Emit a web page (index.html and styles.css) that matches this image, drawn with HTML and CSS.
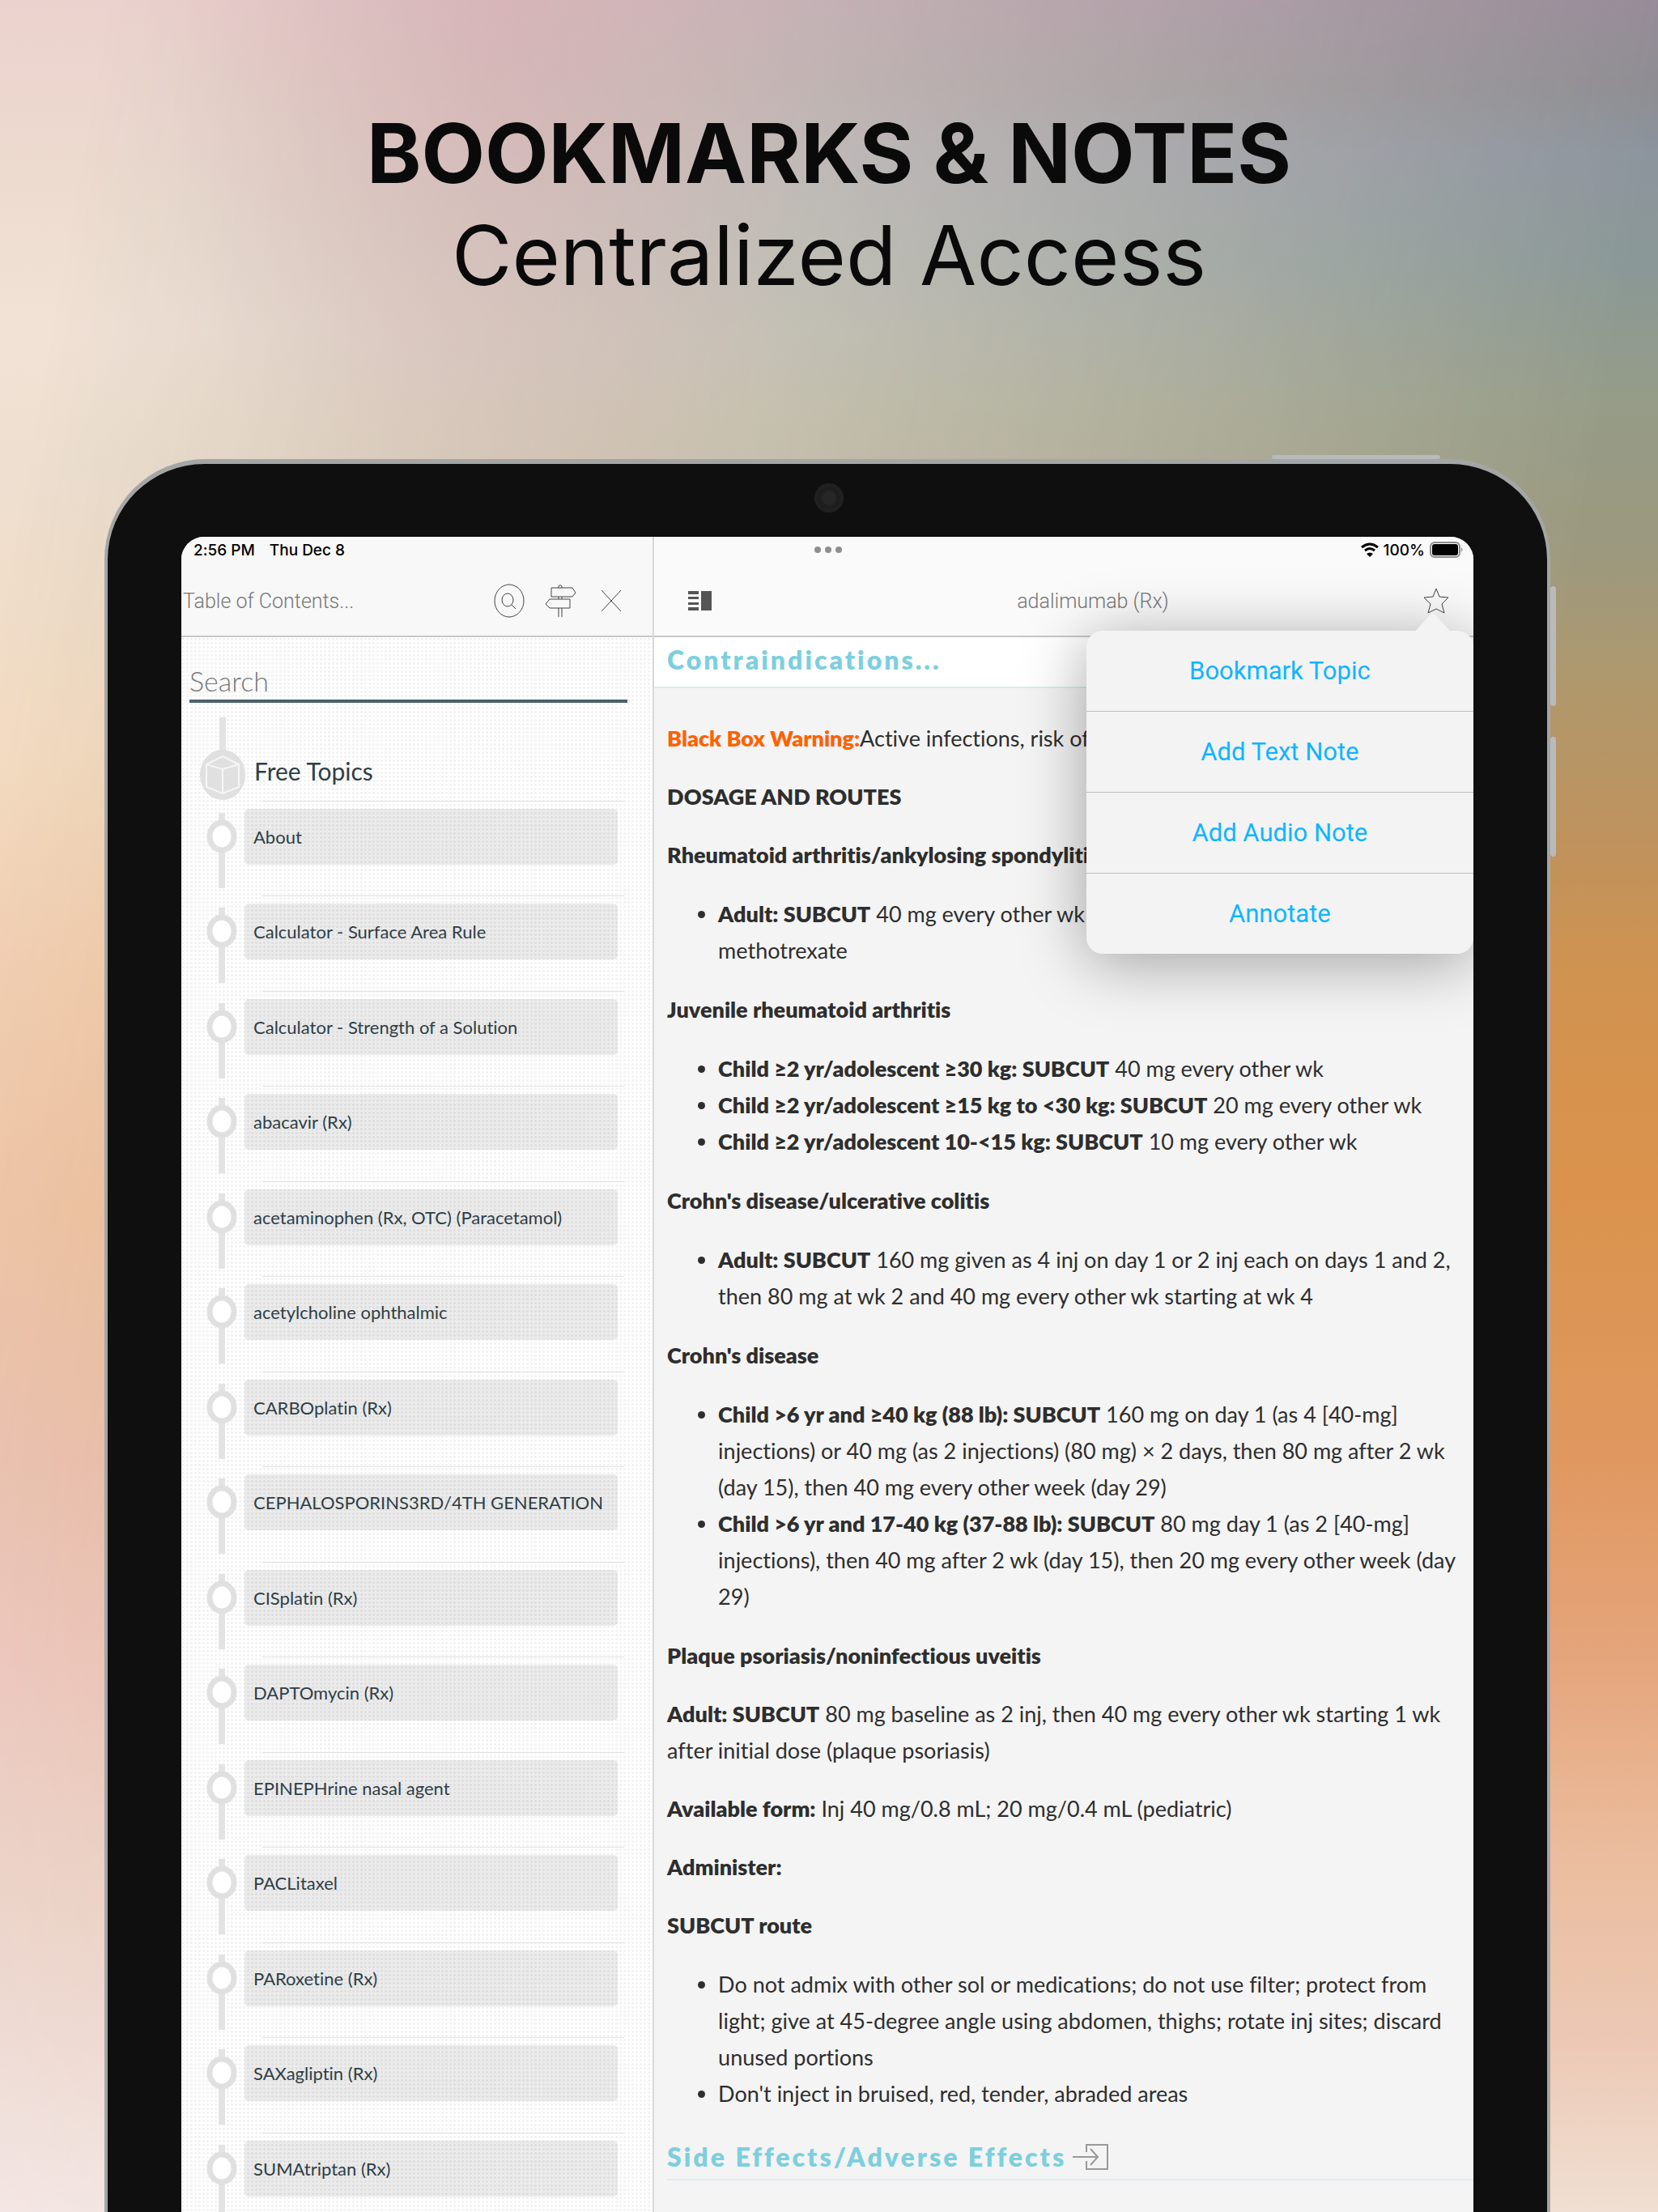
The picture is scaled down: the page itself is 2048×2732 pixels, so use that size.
FILE: index.html
```html
<!DOCTYPE html>
<html lang="en">
<head>
    <meta charset="UTF-8">
    <meta name="viewport" content="width=device-width, initial-scale=1.0">
    <title>Bookmarks &amp; Notes</title>
    <link rel="stylesheet" href="styles.css">
</head>
<body>
  <div class="page">
    <header class="title">
      <h1>BOOKMARKS &amp; NOTES</h1>
      <p>Centralized Access</p>
    </header>
    <div class="device">
      <span class="key key-power"></span>
      <span class="key key-up"></span>
      <span class="key key-down"></span>
      <span class="camera"></span>
      <div class="screen">
        <aside class="left">
          <div class="bar">
            <div class="status"><span>2:56 PM</span><span>Thu Dec 8</span></div>
            <div class="tools">
              <h2>Table of Contents...</h2>
              <button type="button" aria-label="Search">
                <svg width="40" height="42" viewBox="0 0 40 42"><ellipse cx="20" cy="21" rx="18" ry="20"/><ellipse cx="18" cy="20" rx="7" ry="8"/><path d="M23 26l5 5"/></svg>
              </button>
              <button type="button" aria-label="Guide">
                <svg width="40" height="42" viewBox="0 0 40 42"><path d="M18 5V3q2-3 4 0v2M9 5h26l4 6-4 5H9zM18 16v3M22 16v3M32 19H7l-5 6 5 5h25zM18 30v11M22 30v11"/></svg>
              </button>
              <button type="button" aria-label="Close">
                <svg width="40" height="42" viewBox="0 0 40 42"><path d="M8 8l24 26M32 8L8 34"/></svg>
              </button>
            </div>
          </div>
          <div class="toc">
            <input type="text" class="keyword" placeholder="Search" aria-label="Search" />
            <div class="group">
              <svg width="58" height="104" viewBox="0 0 58 104">
                <rect x="25" y="0" width="8" height="42" fill="#e3e3e3"/>
                <ellipse cx="29" cy="71" rx="28" ry="31" fill="#e0e0e0"/>
                <path d="M29 48l20 10v28L29 94 9 86V58zM9 58l20 6 20-6M29 64v30" fill="none" stroke="#f6f6f6" stroke-width="2"/>
              </svg>
              <h3>Free Topics</h3>
            </div>
            <ul class="topics"></ul>
          </div>
        </aside>
        <main class="right">
          <div class="bar">
            <div class="status end">
              <svg width="22" height="18" viewBox="0 0 22 18" fill="none" stroke="#000" stroke-width="3"><path d="M1 6q10-8 20 0M5 10q6-5 12 0"/><path d="M11 18l-4-4q4-3 8 0z" fill="#000" stroke="none"/></svg>
              <span>100%</span>
              <svg width="42" height="20" viewBox="0 0 42 20"><rect x="1" y="1" width="36" height="18" rx="5" fill="none" stroke="#8c8c8c" stroke-width="2"/><rect x="3" y="3" width="32" height="14" rx="3"/><path d="M39 7q3 3 0 6z" fill="#8c8c8c"/></svg>
            </div>
            <div class="tools">
              <button type="button" aria-label="Toggle contents">
                <svg class="solid" width="29" height="24" viewBox="0 0 29 24"><path d="M0 0h13v4H0zM0 7h13v3H0zM0 14h13v3H0zM0 20h13v4H0zM16 0h13v24H16z"/></svg>
              </button>
              <h2>adalimumab (Rx)</h2>
              <button type="button" aria-label="Bookmark">
                <svg width="34" height="34" viewBox="0 0 34 34"><path d="M17 2l4 10 11 1-8 8 3 11-10-5-10 5 3-11-8-8 11-1z" stroke-linejoin="round"/></svg>
              </button>
            </div>
          </div>
          <h2 class="section">Contraindications...</h2>
          <article>
            <p><b class="warning">Black Box Warning:</b>Active infections, risk of infection</p>
            <p><b>DOSAGE AND ROUTES</b></p>
            <p><b>Rheumatoid arthritis/ankylosing spondylitis</b></p>
            <ul>
              <li><b>Adult: SUBCUT</b> 40 mg every other wk<br>methotrexate</li>
            </ul>
            <p><b>Juvenile rheumatoid arthritis</b></p>
            <ul>
              <li><b>Child ≥2 yr/adolescent ≥30 kg: SUBCUT</b> 40 mg every other wk</li>
              <li><b>Child ≥2 yr/adolescent ≥15 kg to &lt;30 kg: SUBCUT</b> 20 mg every other wk</li>
              <li><b>Child ≥2 yr/adolescent 10-&lt;15 kg: SUBCUT</b> 10 mg every other wk</li>
            </ul>
            <p><b>Crohn's disease/ulcerative colitis</b></p>
            <ul>
              <li><b>Adult: SUBCUT</b> 160 mg given as 4 inj on day 1 or 2 inj each on days 1 and 2, then 80 mg at wk 2 and 40 mg every other wk starting at wk 4</li>
            </ul>
            <p><b>Crohn's disease</b></p>
            <ul>
              <li><b>Child &gt;6 yr and ≥40 kg (88 lb): SUBCUT</b> 160 mg on day 1 (as 4 [40-mg] injections) or 40 mg (as 2 injections) (80 mg) × 2 days, then 80 mg after 2 wk (day 15), then 40 mg every other week (day 29)</li>
              <li><b>Child &gt;6 yr and 17-40 kg (37-88 lb): SUBCUT</b> 80 mg day 1 (as 2 [40-mg] injections), then 40 mg after 2 wk (day 15), then 20 mg every other week (day 29)</li>
            </ul>
            <p><b>Plaque psoriasis/noninfectious uveitis</b></p>
            <p><b>Adult: SUBCUT</b> 80 mg baseline as 2 inj, then 40 mg every other wk starting 1 wk after initial dose (plaque psoriasis)</p>
            <p><b>Available form:</b> Inj 40 mg/0.8 mL; 20 mg/0.4 mL (pediatric)</p>
            <p><b>Administer:</b></p>
            <p><b>SUBCUT route</b></p>
            <ul>
              <li>Do not admix with other sol or medications; do not use filter; protect from light; give at 45-degree angle using abdomen, thighs; rotate inj sites; discard unused portions</li>
              <li>Don't inject in bruised, red, tender, abraded areas</li>
            </ul>
            <h2 class="next">Side Effects/Adverse Effects
              <svg width="44" height="32" viewBox="0 0 44 32"><path d="M17 10V1h26v30H17V21M0 16h30M22 6l9 10-9 10"/></svg>
            </h2>
          </article>
          <div class="menu">
            <button type="button">Bookmark Topic</button>
            <button type="button">Add Text Note</button>
            <button type="button">Add Audio Note</button>
            <button type="button">Annotate</button>
          </div>
        </main>
        <span class="dots"><i></i><i></i><i></i></span>
      </div>
    </div>
  </div>
  <script>
    const topics = [
      'About',
      'Calculator - Surface Area Rule',
      'Calculator - Strength of a Solution',
      'abacavir (Rx)',
      'acetaminophen (Rx, OTC) (Paracetamol)',
      'acetylcholine ophthalmic',
      'CARBOplatin (Rx)',
      'CEPHALOSPORINS3RD/4TH GENERATION',
      'CISplatin (Rx)',
      'DAPTOmycin (Rx)',
      'EPINEPHrine nasal agent',
      'PACLitaxel',
      'PARoxetine (Rx)',
      'SAXagliptin (Rx)',
      'SUMAtriptan (Rx)',
    ];
    document.querySelector('.topics').innerHTML = topics
      .map((value) => {
        return `
          <li>
            <svg width="38" height="93" viewBox="0 0 38 93">
              <path d="M15 0h8v93h-8z" fill="#e3e3e3"/>
              <ellipse cx="19" cy="29" rx="15" ry="17" fill="#fff" stroke="#e0e0e0" stroke-width="7"/>
            </svg>
            <a href="#">${value}</a>
          </li>`;
      })
      .join('');
  </script>
</body>
</html>
```
FILE: styles.css
```css
* {
  margin: 0;
  padding: 0;
  box-sizing: border-box;
}
body {
  font-family: Lato, "Open Sans", sans-serif;
  font-variant-ligatures: none;
  color: #2e2e2e;
}
button {
  border: none;
  background: none;
  font: inherit;
}
svg {
  display: block;
  flex: none;
}
.page {
  position: relative;
  z-index: 0;
  height: 100vh;
  overflow: hidden;
  background: linear-gradient(#ecd2ce, #eddccf 9%, #f2e2d6 15%, #eedfd0 21%, #f4dcc2 35%, #f2d0b5 44%, #eec8ac 55%, #eac6b8 66%, #edccc6 75%, #ecd8d0 86%, #f4e8e8);
}
/* right side of the backdrop, faded towards the left */
.page::before {
  content: "";
  position: absolute;
  inset: 0;
  z-index: -1;
  background: linear-gradient(#958a97, #8d8d92 4%, #8c949d 7%, #8a9896 12%, #959c88 18%, #9c997e 25%, #b0986c 31%, #bf925d 38%, #d09350 44%, #da924c 53%, #e09860 66%, #e5a57c 75%, #ebbd9e 84%, #ecc8b4 92%, #f0dfd2);
  -webkit-mask-image: linear-gradient(100deg, transparent 5%, #000 82%);
  mask-image: linear-gradient(100deg, transparent 5%, #000 82%);
}
.page::after {
  content: "";
  position: absolute;
  inset: 0;
  z-index: -1;
  background: radial-gradient(ellipse at 30% 2%, rgba(216, 160, 170, .35), rgba(216, 160, 170, 0) 20%);
}
.title {
  padding-top: 126px;
  text-align: center;
  color: #0a0a0a;
  font-family: Inter, sans-serif;
  font-size: 102px;
  line-height: 126px;
}
.title h1 {
  font-size: 102px;
  font-weight: 700;
}

/* tablet */
.device {
  position: relative;
  margin: 189px 6.5% 0 6.3%;
  padding: 90px 91px 0;
  background: #0f0f0f;
  border: 4px solid #a4a6a6;
  border-top-width: 6px;
  border-bottom: none;
  border-radius: 124px 124px 0 0;
}
.key {
  position: absolute;
  background: #b9babc;
  border-radius: 4px;
}
.key-power {
  top: -11px;
  right: 132px;
  width: 208px;
  height: 5px;
}
.key-up,
.key-down {
  right: -11px;
  width: 7px;
  height: 148px;
}
.key-up {
  top: 151px;
}
.key-down {
  top: 337px;
}
.camera {
  position: absolute;
  top: 24px;
  left: 50%;
  width: 36px;
  height: 36px;
  margin-left: -16px;
  border-radius: 50%;
  background: radial-gradient(#262626 30%, #1c1c1c 45%, #212121 60%);
}
.screen {
  position: relative;
  display: flex;
  height: 2200px;
  border-radius: 28px 28px 0 0;
  overflow: hidden;
  background: #f4f4f4;
}
.dots {
  position: absolute;
  top: 12px;
  left: 50%;
  display: flex;
  gap: 5px;
  margin-left: -16px;
}
.dots i {
  width: 8px;
  height: 8px;
  border-radius: 50%;
  background: #8f8f8f;
}

/* bars */
.bar {
  height: 124px;
  border-bottom: 2px solid #c8c8c8;
  background: #f8f8f8;
}
.status {
  display: flex;
  align-items: center;
  gap: 18px;
  height: 32px;
  padding: 0 15px;
  color: #000;
  font-family: Inter, sans-serif;
  font-size: 19px;
  font-weight: 500;
}
.status.end {
  justify-content: flex-end;
  gap: 6px;
  padding-right: 12px;
}
.tools {
  display: flex;
  align-items: center;
  gap: 23px;
  height: 94px;
}
.tools svg {
  fill: none;
  stroke: #444;
}
.tools .solid {
  fill: #555;
  stroke: none;
}
.tools h2 {
  flex: 1;
  color: #777;
  font-family: Roboto, sans-serif;
  font-size: 25px;
  font-weight: 300;
}

/* table of contents */
.left {
  width: 36.6%;
  border-right: 2px solid #d9d9d9;
}
.left .tools {
  padding: 0 31px 0 2px;
}
.toc {
  height: 100%;
  background: #fff radial-gradient(circle, #f1f1f1 1px, transparent 2px) 0 0 / 5px 5px;
  padding: 27px 31px 0 10px;
}
.keyword {
  display: block;
  width: 100%;
  height: 54px;
  padding-top: 2px;
  border: none;
  border-bottom: 4px solid #4a626a;
  background: none;
  font-family: inherit;
  font-size: 34px;
  font-weight: 300;
  outline: none;
}
.keyword::placeholder {
  color: #777;
}
.group {
  display: flex;
  align-items: flex-start;
  gap: 10px;
  height: 121px;
  padding: 18px 12px 0;
}
.group h3 {
  padding-top: 48px;
  color: #2f3e46;
  font-size: 30px;
  font-weight: 400;
  line-height: 36px;
}
.topics {
  list-style: none;
}
.topics li {
  display: flex;
  align-items: flex-start;
  gap: 9px;
  height: 117px;
  padding: 10px 12px 0 21px;
  background: linear-gradient(#e2e2e2, #e2e2e2) 90px 0 / calc(100% - 94px) 1px no-repeat;
}
.topics li:nth-child(even) {
  height: 118px;
}
.topics svg {
  margin-top: 5px;
}
.topics a {
  flex: 1;
  padding: 0 11px;
  border-radius: 5px;
  background: rgba(0, 0, 0, .08);
  color: #2f3e46;
  font-size: 22px;
  line-height: 69px;
  text-decoration: none;
  white-space: nowrap;
}

/* topic */
.right {
  position: relative;
  flex: 1;
}
.right .bar {
  background: #fafafa;
}
.right .tools {
  padding: 0 29px 0 42px;
}
.right .tools h2 {
  padding-left: 64px;
  text-align: center;
}
.section {
  height: 63px;
  padding-left: 16px;
  border-bottom: 2px solid #d9edf1;
  background: #fff;
  color: #7dcfde;
  font-size: 32px;
  font-weight: 800;
  letter-spacing: 3px;
  line-height: 56px;
}
article {
  padding: 39px 16px 0;
  font-size: 27px;
  line-height: 45px;
}
article p {
  margin-bottom: 27px;
}
article ul {
  margin: 28px 0;
  padding-left: 63px;
}
article b {
  font-weight: 800;
}
.warning {
  color: #ff6100;
}
.next {
  display: flex;
  align-items: center;
  gap: 8px;
  margin-right: -16px;
  padding: 5px 0;
  border-bottom: 2px solid #d9edf1;
  color: #7dcfde;
  font-size: 32px;
  font-weight: 800;
  letter-spacing: 3px;
}
.next svg {
  fill: none;
  stroke: #999;
  stroke-width: 2;
}

/* bookmark menu */
.menu {
  position: absolute;
  top: 116px;
  right: 0;
  width: 478px;
  border-radius: 20px;
  background: #f3f3f4;
  box-shadow: 0 10px 80px rgba(0, 0, 0, .35);
}
.menu::before {
  content: "";
  position: absolute;
  top: -22px;
  right: 28px;
  width: 44px;
  height: 23px;
  background: #f3f3f4;
  clip-path: polygon(0 100%, 45% 5%, 55% 5%, 100% 100%);
}
.menu button {
  display: block;
  width: 100%;
  height: 99px;
  color: #0fb5ff;
  font-family: Roboto, sans-serif;
  font-size: 31px;
}
.menu button + button {
  height: 100px;
  border-top: 1px solid #bcbcbe;
}
```
